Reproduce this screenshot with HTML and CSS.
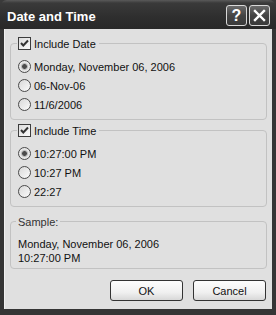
FILE: index.html
```html
<!DOCTYPE html>
<html lang="en">
<head>
    <meta charset="UTF-8">
    <title>Date and Time</title>
    <link rel="stylesheet" href="styles.css">
</head>
<body>
    <div class="window">
        <div class="titlebar">
            <span class="title">Date and Time</span>
            <div class="caption-buttons">
                <span class="cap-btn">?</span>
                <span class="cap-btn">
                    <svg width="13" height="13" viewBox="0 0 13 13">
                        <path d="M2 2 L11 11 M11 2 L2 11" stroke="#fff" stroke-width="2.4" stroke-linecap="square"/>
                    </svg>
                </span>
            </div>
        </div>

        <div class="client">
            <fieldset class="group">
                <legend>
                    <span class="checkbox">
                        <svg width="11" height="11" viewBox="0 0 11 11">
                            <path d="M2 5 L4.3 7.5 L9 2.5" fill="none" stroke="#333" stroke-width="2"/>
                        </svg>
                    </span>
                    Include Date
                </legend>
                <div class="option"><span class="radio selected"></span>Monday, November 06, 2006</div>
                <div class="option"><span class="radio"></span>06-Nov-06</div>
                <div class="option"><span class="radio"></span>11/6/2006</div>
            </fieldset>

            <fieldset class="group">
                <legend>
                    <span class="checkbox">
                        <svg width="11" height="11" viewBox="0 0 11 11">
                            <path d="M2 5 L4.3 7.5 L9 2.5" fill="none" stroke="#333" stroke-width="2"/>
                        </svg>
                    </span>
                    Include Time
                </legend>
                <div class="option"><span class="radio selected"></span>10:27:00 PM</div>
                <div class="option"><span class="radio"></span>10:27 PM</div>
                <div class="option"><span class="radio"></span>22:27</div>
            </fieldset>

            <fieldset class="group sample">
                <legend>Sample:</legend>
                <div class="sample-text">Monday, November 06, 2006</div>
                <div class="sample-text">10:27:00 PM</div>
            </fieldset>

            <div class="buttons">
                <button class="push">OK</button>
                <button class="push">Cancel</button>
            </div>
        </div>
    </div>
</body>
</html>
```

FILE: styles.css
```css
* {
    margin: 0;
    padding: 0;
    box-sizing: border-box;
}

body {
    font-family: "Liberation Sans", Arial, sans-serif;
    font-size: 11px;
    color: #111;
    background-color: #3a3a3a;
}

.window {
    width: 276px;
    height: 315px;
    display: flex;
    flex-direction: column;
    background: #353535;
    border-radius: 7px 7px 0 0;
    padding: 0 4px 6px 4px;
}

/* title bar */
.titlebar {
    height: 29px;
    margin: 0 -4px;
    padding: 3px 6px 0 7px;
    display: flex;
    align-items: center;
    justify-content: space-between;
    border-radius: 7px 7px 0 0;
    background: linear-gradient(#5a5a5a 0, #3a3a3a 3px, #2e2e2e 60%, #282828 100%);
}

.title {
    color: #fff;
    font-weight: bold;
    font-size: 13px;
}

.caption-buttons {
    display: flex;
    gap: 2px;
    margin-top: -1px;
}

.cap-btn {
    width: 21px;
    height: 21px;
    display: flex;
    align-items: center;
    justify-content: center;
    border: 1px solid #d8d8d8;
    border-radius: 3px;
    background: linear-gradient(#6a6a6a, #444 50%, #3a3a3a);
    color: #fff;
    font-weight: bold;
    font-size: 16px;
}

/* client area */
.client {
    flex: 1;
    background: #e0e0e0;
    padding: 8px 5px 0 5px;
    border-left: 1px solid #f0f0f0;
}

.group {
    border: 1px solid #c2c2c2;
    border-radius: 4px;
    padding: 0 7px 5px 7px;
    margin-bottom: 4px;
}

.group legend {
    display: flex;
    align-items: center;
    gap: 3px;
    height: 13px;
    padding: 0 3px 0 1px;
    margin-left: -1px;
}

.checkbox {
    width: 13px;
    height: 13px;
    display: flex;
    align-items: center;
    justify-content: center;
    border: 1px solid #3c3c3c;
    background: linear-gradient(135deg, #dcdcdc, #fafafa);
}

.group legend + .option {
    margin-top: 7px;
}

.option {
    height: 19px;
    display: flex;
    align-items: center;
    gap: 3px;
}

.radio {
    width: 13px;
    height: 13px;
    border-radius: 50%;
    border: 1px solid #4a4a4a;
    background: linear-gradient(135deg, #d8d8d8, #fbfbfb);
}

.radio.selected {
    background: radial-gradient(circle, #4a4a4a 0, #4a4a4a 2px, #a8a8a8 2.6px, #e4e4e4 4px, #f6f6f6 100%);
}

.sample {
    margin-top: 8px;
    padding-bottom: 3px;
    padding-left: 7px;
}

.sample legend {
    color: #333;
    padding: 0 2px;
    margin-left: -2px;
}

.sample-text {
    line-height: 14px;
}

.sample legend + .sample-text {
    margin-top: 9px;
}

.buttons {
    display: flex;
    justify-content: flex-end;
    gap: 10px;
    margin-top: 11px;
    padding-right: 1px;
}

.push {
    width: 73px;
    height: 21px;
    font-family: inherit;
    font-size: 11px;
    color: #111;
    border: 1px solid #333;
    border-radius: 3px;
    background: linear-gradient(#fdfdfd, #f0f0f0 60%, #d8d8d8);
}
```
